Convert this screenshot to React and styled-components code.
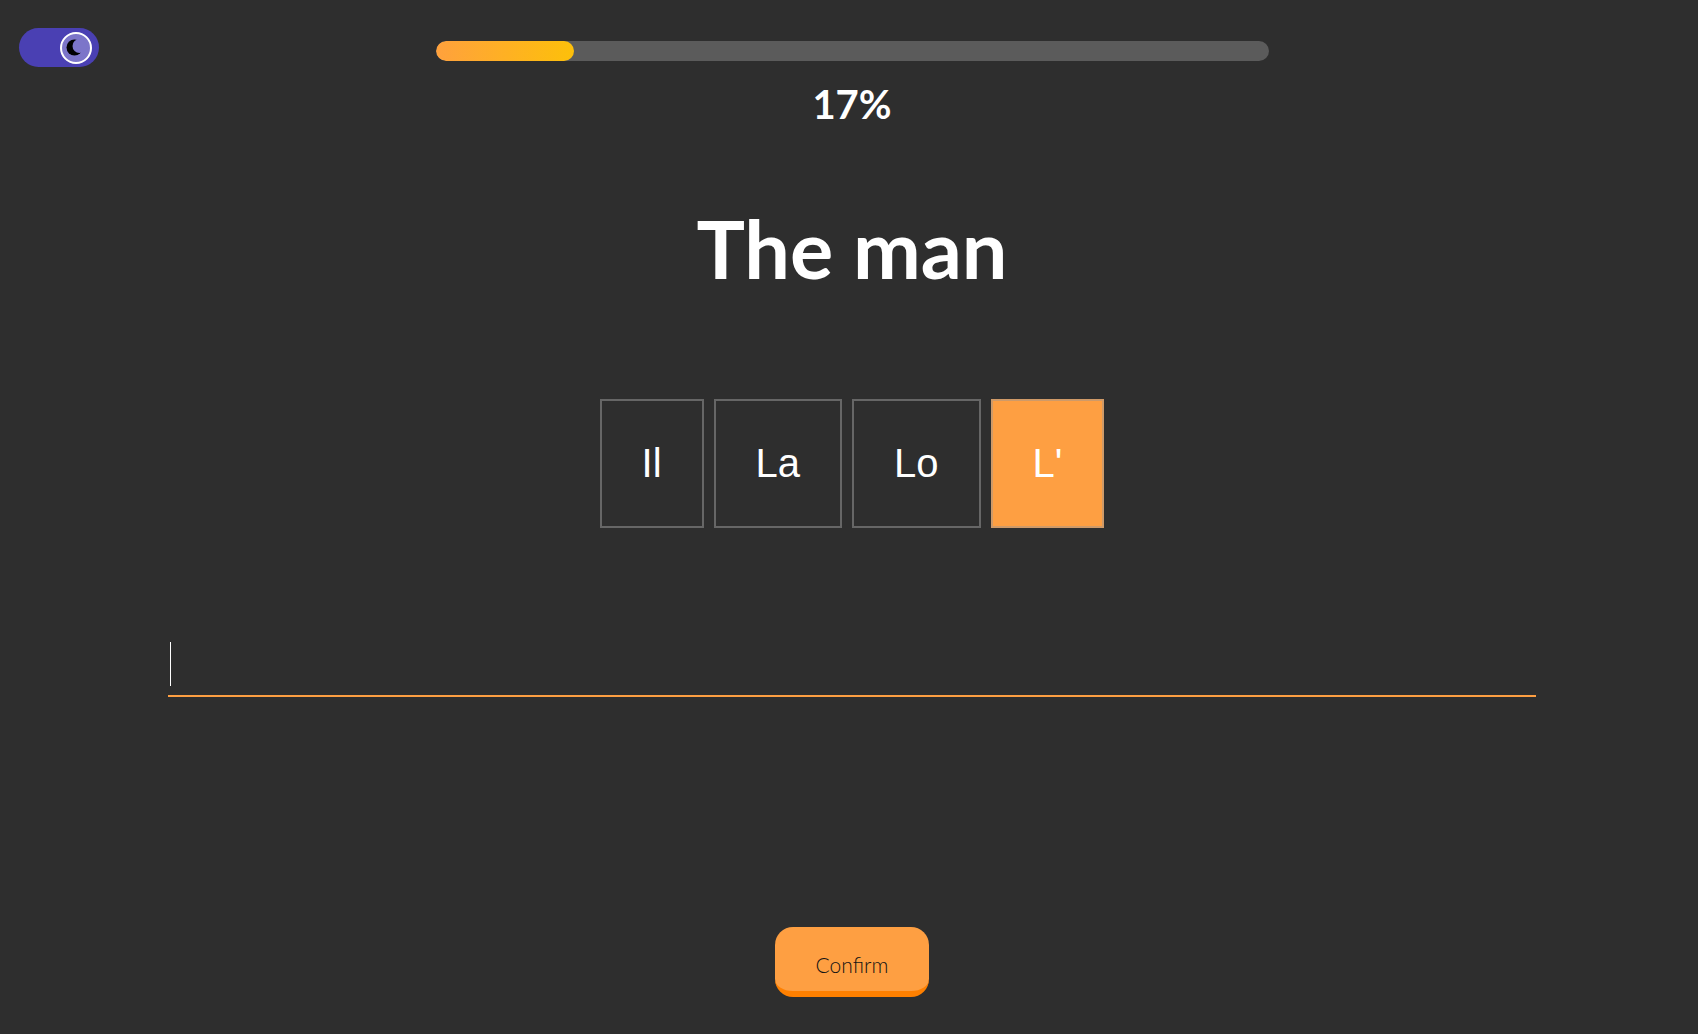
import React, { useState } from "react";
import styled, { createGlobalStyle } from "styled-components";

const orange = "#fe9f42";

const GlobalStyle = createGlobalStyle`
  html, body {
    margin: 0;
    padding: 0;
    background-color: #2e2e2e;
  }
  body {
    font-family: "Lato", "Liberation Sans", sans-serif;
    color: #ffffff;
  }
`;

const Page = styled.div`
  min-height: 1034px;
  box-sizing: border-box;
  padding: 28px 0 0 6px;
  display: flex;
  flex-direction: column;
  align-items: center;
`;

const Header = styled.header`
  width: 100%;
  display: grid;
  grid-template-columns: 1fr 833px 1fr;
  align-items: start;
`;

const Toggle = styled.button`
  margin-left: 13px;
  width: 80px;
  height: 39px;
  border: none;
  border-radius: 20px;
  background-color: #4a40b3;
  padding: 0 7px 0 0;
  display: flex;
  align-items: center;
  justify-content: flex-end;
  cursor: pointer;
`;

const Knob = styled.span`
  width: 28px;
  height: 28px;
  border-radius: 50%;
  border: 2px solid #ffffff;
  background-color: #7c75c9;
  display: flex;
  align-items: center;
  justify-content: center;
`;

const Track = styled.div`
  margin-top: 13px;
  height: 20px;
  border-radius: 10px;
  background-color: #5b5b5b;
  overflow: hidden;
`;

const Fill = styled.div`
  height: 100%;
  border-radius: 10px;
  background: linear-gradient(90deg, #ffa13d 0%, #fdc00a 100%);
`;

const Percent = styled.div`
  margin-top: 13px;
  font-size: 40px;
  line-height: 48px;
  font-weight: 700;
`;

const Title = styled.h1`
  margin: 72px 0 0;
  font-size: 81px;
  line-height: 96px;
  font-weight: 700;
`;

const Choices = styled.div`
  margin-top: 103px;
  display: flex;
  gap: 10px;
`;

const Choice = styled.button`
  height: 129px;
  padding: 0 40px;
  border: 2px solid ${(p) => (p.$active ? "#cf9a68" : "#666666")};
  background-color: ${(p) => (p.$active ? orange : "transparent")};
  color: #ffffff;
  font-family: "Liberation Sans", Arial, sans-serif;
  font-size: 40px;
  cursor: pointer;
`;

const Field = styled.label`
  position: relative;
  margin-top: 114px;
  width: 1368px;
  display: block;
`;

const Caret = styled.span`
  position: absolute;
  left: 2px;
  top: 0;
  width: 1px;
  height: 44px;
  background-color: #ffffff;
  pointer-events: none;
`;

const Answer = styled.input`
  width: 100%;
  height: 55px;
  box-sizing: border-box;
  padding: 0 2px 9px;
  border: none;
  border-bottom: 2px solid ${orange};
  background: transparent;
  color: #ffffff;
  caret-color: transparent;
  font-family: "Lato", sans-serif;
  font-size: 36px;
  line-height: 44px;
  outline: none;
  display: block;
`;

const Confirm = styled.button`
  margin-top: 230px;
  width: 154px;
  height: 70px;
  box-sizing: border-box;
  padding: 24px 0 14px;
  border: none;
  border-bottom: 6px solid #ff8000;
  border-radius: 18px;
  background-color: ${orange};
  color: #141414;
  font-family: "Lato", sans-serif;
  font-size: 21px;
  font-weight: 300;
  line-height: 25px;
  cursor: pointer;
`;

const Moon = () => (
  <svg width="28" height="28" viewBox="0 0 28 28">
    <circle cx="12.5" cy="13.5" r="8" fill="#000000" />
    <circle cx="17.5" cy="12" r="7" fill="#7c75c9" />
  </svg>
);

const options = ["Il", "La", "Lo", "L'"];

export default function App() {
  const [picked, setPicked] = useState("L'");
  const [answer, setAnswer] = useState("");
  const progress = (1 / 6) * 100;

  return (
    <>
      <GlobalStyle />
      <Page>
        <Header>
          <Toggle aria-label="dark mode">
            <Knob>
              <Moon />
            </Knob>
          </Toggle>
          <Track>
            <Fill style={{ width: `${progress}%` }} />
          </Track>
        </Header>
        <Percent>{Math.round(progress)}%</Percent>
        <Title>The man</Title>
        <Choices>
          {options.map((o) => (
            <Choice key={o} $active={picked === o} onClick={() => setPicked(o)}>
              {o}
            </Choice>
          ))}
        </Choices>
        <Field>
          {answer === "" && <Caret />}
          <Answer
            autoFocus
            value={answer}
            onChange={(e) => setAnswer(e.target.value)}
          />
        </Field>
        <Confirm>Confirm</Confirm>
      </Page>
    </>
  );
}
